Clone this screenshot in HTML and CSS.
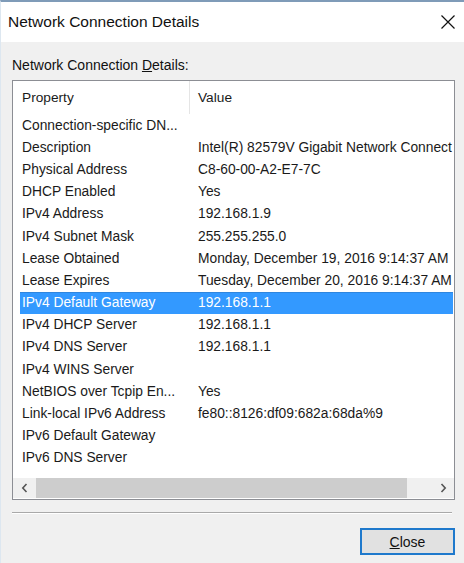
FILE: index.html
```html
<!DOCTYPE html>
<html>
<head>
<meta charset="utf-8">
<title>Network Connection Details</title>
<link rel="stylesheet" href="styles.css">
</head>
<body>
<div class="window">
  <div class="titlebar">
    <span class="title">Network Connection Details</span>
    <svg class="close-x" width="16" height="16" viewBox="0 0 16 16"><path d="M1.5 1.5 L14.5 14.5 M14.5 1.5 L1.5 14.5" stroke="#111" stroke-width="1.2" fill="none"/></svg>
  </div>
  <div class="body">
    <div class="label">Network Connection <u>D</u>etails:</div>
    <div class="listbox">
      <div class="header">
        <div class="hcell h1">Property</div>
        <div class="hcell h2">Value</div>
      </div>
      <div class="rows">
        <div class="row"><span class="c1">Connection-specific DN...</span><span class="c2"></span></div>
        <div class="row"><span class="c1">Description</span><span class="c2">Intel(R) 82579V Gigabit Network Connect</span></div>
        <div class="row"><span class="c1">Physical Address</span><span class="c2">C8-60-00-A2-E7-7C</span></div>
        <div class="row"><span class="c1">DHCP Enabled</span><span class="c2">Yes</span></div>
        <div class="row"><span class="c1">IPv4 Address</span><span class="c2">192.168.1.9</span></div>
        <div class="row"><span class="c1">IPv4 Subnet Mask</span><span class="c2">255.255.255.0</span></div>
        <div class="row"><span class="c1">Lease Obtained</span><span class="c2">Monday, December 19, 2016 9:14:37 AM</span></div>
        <div class="row"><span class="c1">Lease Expires</span><span class="c2">Tuesday, December 20, 2016 9:14:37 AM</span></div>
        <div class="row selected"><span class="c1">IPv4 Default Gateway</span><span class="c2">192.168.1.1</span></div>
        <div class="row"><span class="c1">IPv4 DHCP Server</span><span class="c2">192.168.1.1</span></div>
        <div class="row"><span class="c1">IPv4 DNS Server</span><span class="c2">192.168.1.1</span></div>
        <div class="row"><span class="c1">IPv4 WINS Server</span><span class="c2"></span></div>
        <div class="row"><span class="c1">NetBIOS over Tcpip En...</span><span class="c2">Yes</span></div>
        <div class="row"><span class="c1">Link-local IPv6 Address</span><span class="c2">fe80::8126:df09:682a:68da%9</span></div>
        <div class="row"><span class="c1">IPv6 Default Gateway</span><span class="c2"></span></div>
        <div class="row"><span class="c1">IPv6 DNS Server</span><span class="c2"></span></div>
      </div>
      <div class="hscroll">
        <div class="arrow"><svg width="8" height="10" viewBox="0 0 8 10"><path d="M5.5 1 L1.8 5 L5.5 9" stroke="#555" stroke-width="1.6" fill="none"/></svg></div>
        <div class="thumb"></div>
        <div class="track"></div>
        <div class="arrow"><svg width="8" height="10" viewBox="0 0 8 10"><path d="M2.5 1 L6.2 5 L2.5 9" stroke="#555" stroke-width="1.6" fill="none"/></svg></div>
      </div>
    </div>
    <div class="sep"></div>
    <div class="footer">
      <button class="btn"><u>C</u>lose</button>
    </div>
  </div>
</div>
</body>
</html>
```
FILE: styles.css
```css
html, body {
  margin: 0;
  padding: 0;
  height: 563px;
  overflow: hidden;
  background: #f0f0f0;
  font-family: "Liberation Sans", Arial, sans-serif;
  color: #1a1a1a;
}

.window {
  height: 563px;
  box-sizing: border-box;
  border-top: 2px solid #7f9bb8;
  border-left: 1px solid #dde7f0;
  background: #f0f0f0;
}

.titlebar {
  height: 40px;
  background: #ffffff;
  display: flex;
  align-items: center;
  justify-content: space-between;
  padding: 0 8px 0 7px;
}

.title {
  font-size: 15.5px;
  color: #111;
}

.close-x {
  display: block;
}

.body {
  padding: 0 9px 0 11px;
}

.label {
  margin-top: 15px;
  font-size: 14px;
  line-height: 16px;
  height: 16px;
  color: #111;
}

.listbox {
  margin-top: 7px;
  width: 443px;
  height: 420px;
  box-sizing: border-box;
  border: 1px solid #8c8e94;
  background: #ffffff;
  display: flex;
  flex-direction: column;
  overflow: hidden;
}

.header {
  height: 33px;
  flex: none;
  display: flex;
  font-size: 13.7px;
}

.hcell {
  display: flex;
  align-items: center;
  padding-bottom: 1px;
}

.h1 {
  width: 167px;
  padding-left: 9px;
  border-right: 1px solid #e5e5e5;
}

.h2 {
  padding-left: 8px;
}

.rows {
  flex: 1;
  overflow: hidden;
}

.row {
  height: 22.2px;
  margin-left: 7px;
  width: 433px;
  display: flex;
  align-items: center;
  font-size: 13.8px;
  white-space: nowrap;
  overflow: hidden;
}

.row .c1 {
  flex: none;
  width: 167px;
  padding-left: 2px;
}

.row .c2 {
  padding-left: 9px;
}

.row.selected {
  background: #3399ff;
  color: #ffffff;
  box-shadow: inset 0 1px 0 #2f86de;
}

.hscroll {
  height: 20px;
  flex: none;
  margin-bottom: 1px;
  display: flex;
  background: #f0f0f0;
}

.arrow {
  width: 23px;
  display: flex;
  align-items: center;
  justify-content: center;
}

.thumb {
  width: 371px;
  background: #cdcdcd;
}

.track {
  flex: 1;
}

.sep {
  margin-top: 12px;
  width: 440px;
  border-top: 1px solid #a9a9a9;
  border-bottom: 1px solid #ffffff;
}

.footer {
  display: flex;
  justify-content: flex-end;
  margin-top: 14px;
}

.btn {
  width: 95px;
  height: 27px;
  box-sizing: border-box;
  border: 2px solid #1f79cc;
  background: #e1e1e1;
  font-family: "Liberation Sans", Arial, sans-serif;
  font-size: 14px;
  color: #111;
  padding: 0;
}
```
